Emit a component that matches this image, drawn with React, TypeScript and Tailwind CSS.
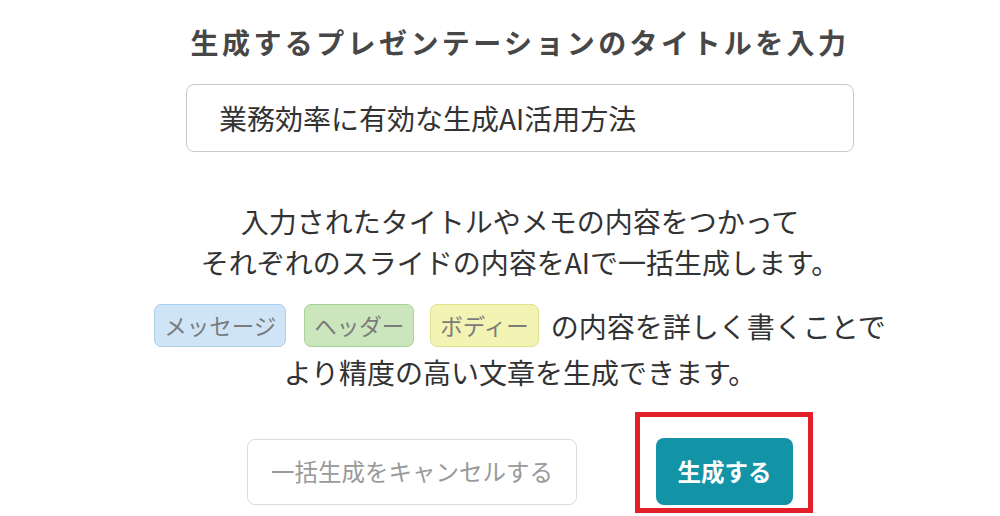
import React from "react";

const font = { fontFamily: '"Noto Sans CJK JP", "Noto Sans", sans-serif' };

const Tag: React.FC<{ label: string; cls: string }> = ({ label, cls }) => (
    <span className={`h-[43px] px-[9px] flex items-center rounded-[7px] border text-[22.5px] text-[#7b7b7b] ${cls}`}>{label}</span>
);

const App: React.FC = () => {
    return (
        <div className="relative w-full h-[516px] overflow-hidden bg-white" style={font}>
            <div className="flex flex-col items-center pl-10 pt-[22px]">
                <h1 className="h-[40px] leading-[40px] text-[28px] font-bold tracking-[3.4px] text-[#474747]">
                    生成するプレゼンテーションのタイトルを入力
                </h1>
                <div className="mt-[22px] w-[668px] h-[68px] flex items-center px-[32px] border border-[#c9c9c9] rounded-lg text-[28px] text-[#333]">
                    業務効率に有効な生成AI活用方法
                </div>
                <p className="mt-[49px] text-center text-[28px] leading-[41px] text-[#333]">
                    入力されたタイトルやメモの内容をつかって
                    <br />
                    それぞれのスライドの内容をAIで一括生成します。
                </p>
                <div className="mt-[21px] h-[43px] flex items-center text-[28px] text-[#333]">
                    <Tag label="メッセージ" cls="bg-[#cfe5f7] border-[#a9cfee]" />
                    <span className="w-[18px]" />
                    <Tag label="ヘッダー" cls="bg-[#cbe6bd] border-[#a8d397]" />
                    <span className="w-[16px]" />
                    <Tag label="ボディー" cls="bg-[#f3f3b3] border-[#e0e08f]" />
                    <span className="ml-[12px]">の内容を詳しく書くことで</span>
                </div>
                <p className="mt-[5px] text-[28px] leading-[41px] text-[#333]">より精度の高い文章を生成できます。</p>
                <div className="mt-[45px] flex items-center gap-[79px]">
                    <button className="w-[330px] h-[66px] rounded-lg border border-[#dcdcdc] bg-white text-[23.5px] text-[#999]">
                        一括生成をキャンセルする
                    </button>
                    <button className="w-[137px] h-[67px] rounded-lg bg-[#1394a6] text-white text-[23.5px] font-bold">
                        生成する
                    </button>
                </div>
            </div>
            <div className="absolute left-[635px] top-[412px] w-[178px] h-[101px] border-[5px] border-[#e3202a]" />
        </div>
    );
};

export default App;
